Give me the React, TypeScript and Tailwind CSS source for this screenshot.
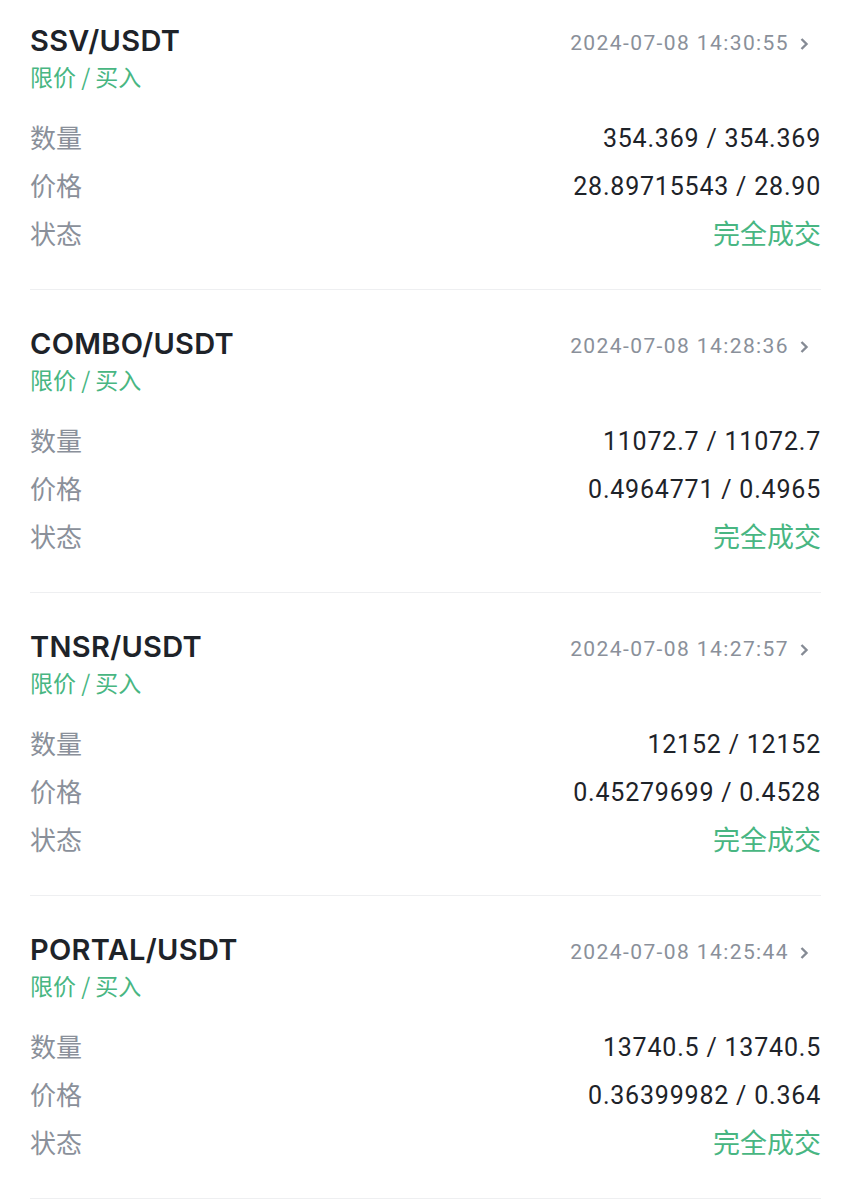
const orders = [
  {
    pair: "SSV/USDT",
    time: "2024-07-08 14:30:55",
    amount: "354.369 / 354.369",
    price: "28.89715543 / 28.90",
  },
  {
    pair: "COMBO/USDT",
    time: "2024-07-08 14:28:36",
    amount: "11072.7 / 11072.7",
    price: "0.4964771 / 0.4965",
  },
  {
    pair: "TNSR/USDT",
    time: "2024-07-08 14:27:57",
    amount: "12152 / 12152",
    price: "0.45279699 / 0.4528",
  },
  {
    pair: "PORTAL/USDT",
    time: "2024-07-08 14:25:44",
    amount: "13740.5 / 13740.5",
    price: "0.36399982 / 0.364",
  },
];

const cjk = "font-['Noto_Sans_CJK_SC',sans-serif]";
const num = "font-['Roboto','Noto_Sans_CJK_SC',sans-serif]";

function Chevron() {
  return (
    <svg width="10" height="14" viewBox="0 0 10 14" className="ml-[10px]">
      <path d="M2.5 2 L7.5 7 L2.5 12" fill="none" stroke="#858b95" strokeWidth="2.4" />
    </svg>
  );
}

function Row({ label, children }: { label: string; children: React.ReactNode }) {
  return (
    <div className="flex h-[48px] items-center justify-between">
      <span className={`${cjk} -mt-[3px] text-[26px] text-[#8a909a]`}>{label}</span>
      {children}
    </div>
  );
}

export default function App() {
  return (
    <div className="min-h-screen bg-white px-[30px]">
      {orders.map((o, i) => (
        <div
          key={o.pair}
          className={`${i === 0 ? "pt-[22px]" : "pt-[35px]"} border-b border-[#eeeff1] pb-[31px]`}
        >
          <div className="flex h-[36px] items-center justify-between">
            <span className="font-['Inter',sans-serif] text-[29px] font-semibold leading-none tracking-[0.3px] text-[#1e2329]">
              {o.pair}
            </span>
            <div className="mt-[7px] mr-[12px] flex items-center">
              <span className={`${num} text-[21px] tracking-[1.4px] text-[#8a909a]`}>{o.time}</span>
              <Chevron />
            </div>
          </div>
          <div className={`${cjk} mt-[4px] h-[28px] text-[23px] leading-[28px] text-[#48b682]`}>
            限价 / 买入
          </div>
          <div className="mt-[24px]">
            <Row label="数量">
              <span className={`${num} mt-[2px] text-[25px] tracking-[0.8px] text-[#1e2329]`}>{o.amount}</span>
            </Row>
            <Row label="价格">
              <span className={`${num} mt-[2px] text-[25px] tracking-[0.8px] text-[#1e2329]`}>{o.price}</span>
            </Row>
            <Row label="状态">
              <span className={`${cjk} -mt-[1px] text-[27px] text-[#48b682]`}>完全成交</span>
            </Row>
          </div>
        </div>
      ))}
    </div>
  );
}
